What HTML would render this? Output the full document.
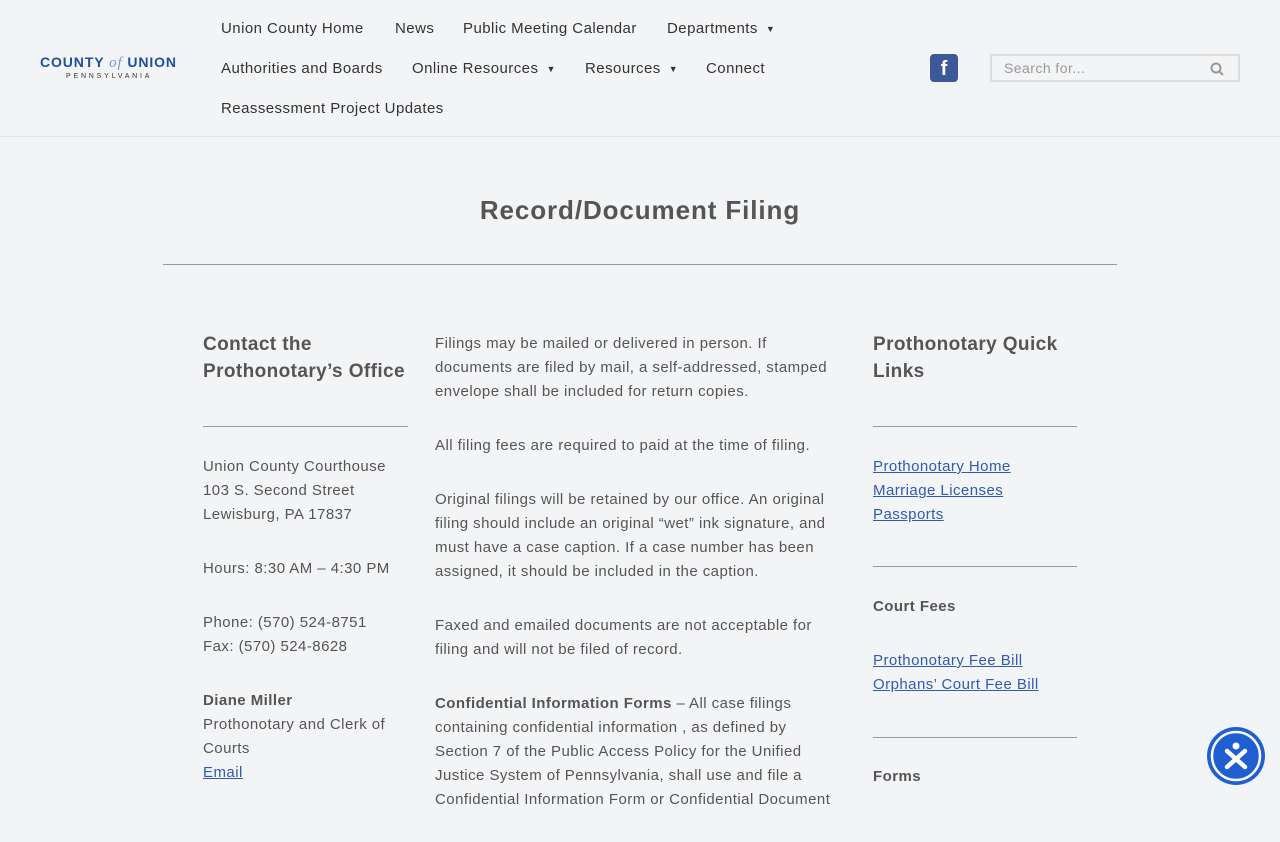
<!DOCTYPE html>
<html><head><meta charset="utf-8"><style>
*{margin:0;padding:0;box-sizing:border-box}
html{overflow:hidden;height:800px}
body{width:1280px;height:800px;overflow:hidden;background:#f3f4f6;font-family:"Liberation Sans",sans-serif;color:#555;font-size:15px;letter-spacing:.45px}
.hdr{position:absolute;left:0;top:0;width:1280px;height:137px;border-bottom:1px solid #e6e7ea}
.logo{position:absolute;left:40px;top:54px;color:#1e4f9c;font-weight:bold;font-size:14px;letter-spacing:.9px}
.logo i{font-family:"Liberation Serif",serif;font-weight:normal;color:#7a9bcc;font-size:15px}
.logo .pa{position:absolute;left:26px;top:19px;font-size:7px;color:#333;letter-spacing:2.8px;font-weight:normal}
.nav a{position:absolute;color:#333;text-decoration:none;font-size:15px;white-space:nowrap}
.car{font-size:9px;margin-left:8px;vertical-align:1px}
.fb{position:absolute;left:930px;top:54px;width:28px;height:28px;background:#3b5998;border-radius:4px;color:#fff;font-weight:bold;font-size:20px;text-align:center;line-height:30px;letter-spacing:0}
.srch{position:absolute;left:990px;top:54px;width:250px;height:28px;border:2px solid #ddd;color:#999;font-size:14px;padding:4px 12px}
.t{position:absolute;left:0;width:1280px;top:195px;text-align:center;font-size:26px;font-weight:bold;color:#555;letter-spacing:.9px}
.hr{position:absolute;height:1px;background:#999}
.c{position:absolute;line-height:24px}
.c p{margin-bottom:30px}
h3{font-size:19px;line-height:27px;color:#555;letter-spacing:.4px}
a.l{color:#2f5bb1;text-decoration:underline}
.b{font-weight:bold}
.acc{position:absolute;left:1207px;top:727px;width:58px;height:58px;border-radius:50%;background:#1f5fd1}
</style></head><body>
<div class="hdr">
<div class="logo">COUNTY <i>of</i> UNION<div class="pa">PENNSYLVANIA</div></div>
<div class="nav">
<a style="left:221px;top:20px">Union County Home</a>
<a style="left:395px;top:20px">News</a>
<a style="left:463px;top:20px">Public Meeting Calendar</a>
<a style="left:667px;top:20px">Departments<span class="car">▼</span></a>
<a style="left:221px;top:60px">Authorities and Boards</a>
<a style="left:412px;top:60px">Online Resources<span class="car">▼</span></a>
<a style="left:585px;top:60px">Resources<span class="car">▼</span></a>
<a style="left:706px;top:60px">Connect</a>
<a style="left:221px;top:100px">Reassessment Project Updates</a>
</div>
<div class="fb">f</div>
<div class="srch">Search for...<svg style="position:absolute;right:14px;top:6px" width="14" height="14" viewBox="0 0 14 14"><circle cx="6" cy="6" r="4.5" stroke="#999" stroke-width="2" fill="none"/><path d="M9.5 9.5L13 13" stroke="#999" stroke-width="2"/></svg></div>
</div>
<div class="t">Record/Document Filing</div>
<div class="hr" style="left:163px;top:264px;width:954px"></div>

<div class="c" style="left:203px;top:331px;width:210px">
<h3>Contact the Prothonotary’s Office</h3>
</div>
<div class="hr" style="left:203px;top:426px;width:205px"></div>
<div class="c" style="left:203px;top:455px;width:195px">
<p>Union County Courthouse<br>103 S. Second Street<br>Lewisburg, PA 17837</p>
<p>Hours: 8:30 AM – 4:30 PM</p>
<p>Phone: (570) 524-8751<br>Fax: (570) 524-8628</p>
<p><span class="b">Diane Miller</span><br>Prothonotary and Clerk of Courts<br><a class="l">Email</a></p>
</div>

<div class="c" style="left:435px;top:332px;width:412px">
<p>Filings may be mailed or delivered in person. If<br>documents are filed by mail, a self-addressed, stamped<br>envelope shall be included for return copies.</p>
<p>All filing fees are required to paid at the time of filing.</p>
<p>Original filings will be retained by our office. An original<br>filing should include an original “wet” ink signature, and<br>must have a case caption. If a case number has been<br>assigned, it should be included in the caption.</p>
<p>Faxed and emailed documents are not acceptable for<br>filing and will not be filed of record.</p>
<p><span class="b">Confidential Information Forms</span> – All case filings<br>containing confidential information , as defined by<br>Section 7 of the Public Access Policy for the Unified<br>Justice System of Pennsylvania, shall use and file a<br>Confidential Information Form or Confidential Document</p>
</div>

<div class="c" style="left:873px;top:331px;width:205px">
<h3>Prothonotary Quick Links</h3>
</div>
<div class="hr" style="left:873px;top:426px;width:204px"></div>
<div class="c" style="left:873px;top:455px"><a class="l">Prothonotary Home</a><br><a class="l">Marriage Licenses</a><br><a class="l">Passports</a></div>
<div class="hr" style="left:873px;top:566px;width:204px"></div>
<div class="c b" style="left:873px;top:595px">Court Fees</div>
<div class="c" style="left:873px;top:649px"><a class="l">Prothonotary Fee Bill</a><br><a class="l">Orphans’ Court Fee Bill</a></div>
<div class="hr" style="left:873px;top:737px;width:204px"></div>
<div class="c b" style="left:873px;top:765px">Forms</div>

<div class="acc"><svg width="58" height="58" viewBox="0 0 58 58"><circle cx="29" cy="29" r="24" stroke="#fff" stroke-width="2.5" fill="none"/><circle cx="29" cy="19" r="3.5" fill="#fff"/><path d="M20 24L38 40M38 24L20 40" stroke="#fff" stroke-width="4.5" stroke-linecap="round"/></svg></div>
</body></html>
